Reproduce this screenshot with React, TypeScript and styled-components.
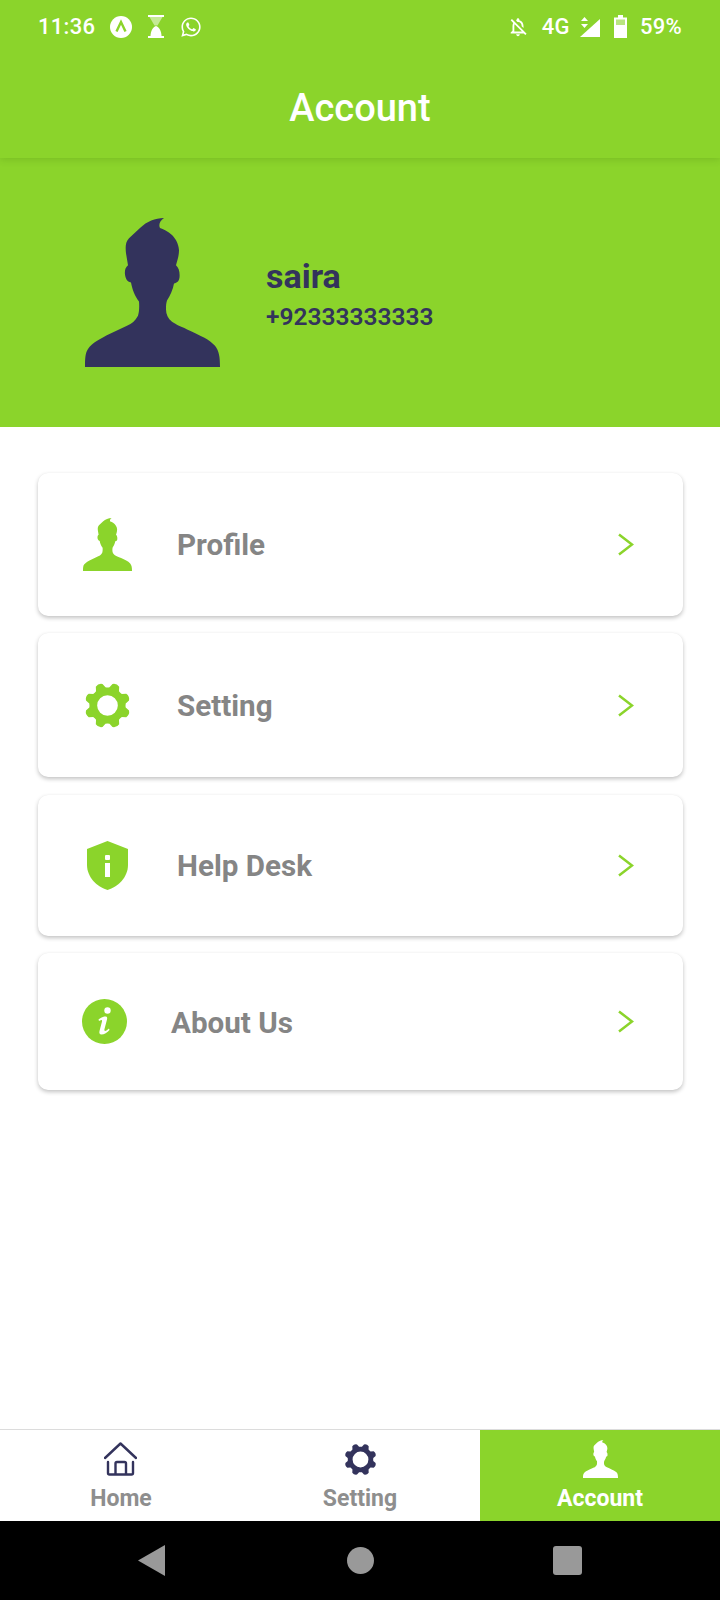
import React from 'react';
import styled, { createGlobalStyle } from 'styled-components';
import { FaWhatsapp } from 'react-icons/fa';
import { MdOutlineNotificationsOff } from 'react-icons/md';

const GREEN = '#8bd42b';
const NAVY = '#33335c';

const Global = createGlobalStyle`
  html, body { margin: 0; padding: 0; background: #fff; }
  body { font-family: Roboto, "Liberation Sans", sans-serif; }
`;

const Screen = styled.div`
  width: 720px;
  height: 1600px;
  display: flex;
  flex-direction: column;
  background: #fff;
  overflow: hidden;
`;

const TopBar = styled.header`
  position: relative;
  z-index: 1;
  height: 158px;
  flex: none;
  box-sizing: border-box;
  padding: 15px 38px 0;
  background: ${GREEN};
  box-shadow: 0 2px 7px rgba(40, 80, 0, 0.16);
  color: #fff;
  display: flex;
  flex-direction: column;
`;

const StatusRow = styled.div`
  height: 23px;
  display: flex;
  align-items: center;
  font-size: 22px;
  line-height: 23px;
`;

const StatusGroup = styled.div`
  display: flex;
  align-items: center;
`;

const StatusSpacer = styled.div`
  flex: 1;
`;

const StatusText = styled.span<{ $ml?: number }>`
  margin-left: ${(p) => p.$ml ?? 0}px;
  letter-spacing: 0.3px;
  font-weight: 500;
`;

const StatusSvg = styled.svg<{ $ml: number }>`
  display: block;
  flex: none;
  margin-left: ${(p) => p.$ml}px;
`;

const Whats = styled(FaWhatsapp)`
  display: block;
  margin-left: 16px;
`;

const BellOff = styled(MdOutlineNotificationsOff)`
  display: block;
`;

const Title = styled.h1`
  margin: 46px 0 0;
  text-align: center;
  font-size: 38px;
  line-height: 48px;
  font-weight: 500;
`;

const Banner = styled.section`
  height: 269px;
  flex: none;
  box-sizing: border-box;
  padding: 60px 0 0 85px;
  background: ${GREEN};
  display: flex;
  align-items: flex-start;
`;

const AvatarIcon = styled.svg`
  display: block;
  flex: none;
`;

const BannerText = styled.div`
  margin: 38px 0 0 46px;
  color: ${NAVY};
`;

const UserName = styled.div`
  font-size: 34px;
  line-height: 40px;
  font-weight: 700;
`;

const UserPhone = styled.div`
  margin-top: 6px;
  font-size: 24.5px;
  line-height: 30px;
  font-weight: 600;
`;

const Menu = styled.main`
  flex: 1;
  padding: 46px 37px 0 38px;
  display: flex;
  flex-direction: column;
  gap: 17.3px;
`;

const Card = styled.div<{ $h: number }>`
  height: ${(p) => p.$h}px;
  flex: none;
  box-sizing: border-box;
  padding-right: 49px;
  display: flex;
  align-items: center;
  background: #fff;
  border-radius: 10px;
  box-shadow: 0 2px 4px rgba(0, 0, 0, 0.24), 0 0 1px rgba(0, 0, 0, 0.05);
`;

const IconCell = styled.div<{ $inset?: number }>`
  width: 139px;
  flex: none;
  display: flex;
  justify-content: center;
  box-sizing: border-box;
  padding-right: ${(p) => p.$inset ?? 0}px;
`;

const CardLabel = styled.span<{ $shift?: number; $drop?: number }>`
  flex: 1;
  margin-left: ${(p) => p.$shift ?? 0}px;
  padding-top: ${(p) => p.$drop ?? 0}px;
  color: #858585;
  font-size: 29.6px;
  line-height: 36px;
  font-weight: 700;
`;

const Chevron = styled.svg`
  display: block;
  flex: none;
`;

const TabBar = styled.nav`
  height: 92px;
  flex: none;
  box-sizing: border-box;
  border-top: 1px solid #dcdcdc;
  display: grid;
  grid-template-columns: repeat(3, 240px);
`;

const Tab = styled.div<{ $active?: boolean }>`
  display: flex;
  flex-direction: column;
  align-items: center;
  background: ${(p) => (p.$active ? GREEN : '#fff')};
  color: ${(p) => (p.$active ? '#fff' : '#8e8e8e')};
`;

const TabIcon = styled.div`
  height: 46px;
  padding-top: 6px;
  display: flex;
  align-items: center;
`;

const TabLabel = styled.span<{ $nudge?: number }>`
  margin-top: 3px;
  margin-left: ${(p) => p.$nudge ?? 0}px;
  font-size: 23px;
  line-height: 27px;
  font-weight: 700;
`;

const NavBar = styled.div`
  height: 79px;
  flex: none;
  background: #000;
  display: grid;
  grid-template-columns: repeat(3, 1fr);
  align-items: center;
`;

const NavCell = styled.div<{ $shift: number }>`
  display: flex;
  justify-content: center;
  transform: translateX(${(p) => p.$shift}px);
`;

const NavBack = styled.svg`
  display: block;
`;

const NavHome = styled.div`
  width: 27px;
  height: 27px;
  border-radius: 50%;
  background: #999;
`;

const NavRecent = styled.div`
  width: 29px;
  height: 29px;
  border-radius: 3px;
  background: #999;
`;

const PERSON =
  'M79 0C70 0.5 62 3 55 10L44 20C40 24 40.500 30 41 35L43 47C40.500 49 39.500 52 40 56C40.500 60 42 63 46 64C47 70 50 78 54 83C54.500 89 54 94 53 97C50 102 47 105 42 107L25 115C15 120 7 124 3 130C0.500 134 0 138 0 148H135C135 138 134 132 130 127C124 120 115 117 105 112C97 108 91 106 87 103C83 100 81 96 81 91C81 87 81 85 82 82C85 77 88 71 89 65C92 64 94 63 94.500 59C95 54 94 50 91 47C92 43 94 38 94 32C93.500 25 90 20 87 17C83 13 78 11 75 10C73.500 7 74.500 3 79 0Z';

const Person = ({ w, h, fill }: { w: number; h: number; fill: string }) => (
  <AvatarIcon width={w} height={h} viewBox="0 0 135 148" preserveAspectRatio="none">
    <path d={PERSON} fill={fill} />
  </AvatarIcon>
);

const gearPath = (hole: number) => {
  const c = 50;
  const outer = 50;
  const inner = 39;
  const n = 8;
  const pt = (r: number, a: number) =>
    `${(c + r * Math.sin(a)).toFixed(2)} ${(c - r * Math.cos(a)).toFixed(2)}`;
  let d = '';
  for (let i = 0; i < n; i++) {
    const a = ((i + 0.5) * 2 * Math.PI) / n;
    const w = Math.PI / n;
    d += `${i === 0 ? 'M' : 'L'}${pt(inner, a - w * 0.72)}`;
    d += `L${pt(outer - 3, a - w * 0.42)}`;
    d += `Q${pt(outer + 1.5, a)} ${pt(outer - 3, a + w * 0.42)}`;
    d += `L${pt(inner, a + w * 0.72)}`;
    d += `Q${pt(inner - 1, a + w)} ${pt(inner, a + w * 1.28)}`;
  }
  d += `ZM${c - hole} ${c}a${hole} ${hole} 0 1 0 ${hole * 2} 0a${hole} ${hole} 0 1 0 ${-hole * 2} 0Z`;
  return d;
};

const Gear = ({ size, hole, fill }: { size: number; hole: number; fill: string }) => (
  <AvatarIcon width={size} height={size} viewBox="0 0 100 100">
    <path d={gearPath(hole)} fill={fill} fillRule="evenodd" />
  </AvatarIcon>
);

const Shield = () => (
  <AvatarIcon width={41} height={49} viewBox="0 0 41 49">
    <path
      d="M20.500 0L41 8V24C41 36 31 46 20.500 49C10 46 0 36 0 24V8Z"
      fill={GREEN}
    />
    <rect x="18" y="14" width="5" height="5" rx="1" fill="#fff" />
    <rect x="18" y="22" width="5" height="14" fill="#fff" />
  </AvatarIcon>
);

const InfoCircle = () => (
  <AvatarIcon width={45} height={45} viewBox="0 0 45 45">
    <circle cx="22.500" cy="22.500" r="22.500" fill={GREEN} />
    <circle cx="25.500" cy="11.500" r="3.200" fill="#fff" />
    <path
      d="M16.500 20.500C18 19 21 17.500 23.500 17.500C25 17.500 25.500 18.500 25 20.500L22.500 30C22 32 23 32.500 24.500 31.500L27 29.500L27.500 31C25.500 33.500 22 35.500 19.500 35.500C17.500 35.500 17 34 17.500 32L20 22.500C20.300 21 19.500 20.500 18 21.500L17 22Z"
      fill="#fff"
    />
  </AvatarIcon>
);

const ChevronIcon = () => (
  <Chevron width={17} height={23} viewBox="0 0 17 23">
    <path d="M2 1.500L15 11.500L2 21.500" fill="none" stroke={GREEN} strokeWidth="2.500" />
  </Chevron>
);

const HomeIcon = () => (
  <AvatarIcon width={33} height={34} viewBox="0 0 33 34" fill="none" stroke={NAVY} strokeWidth="2.400">
    <path d="M1 16L16.500 1.500L32 16" strokeLinecap="round" strokeLinejoin="round" />
    <path d="M4 20V31C4 32 4.500 32.500 5.500 32.500H27.500C28.500 32.500 29 32 29 31V20" strokeLinecap="round" />
    <path d="M11.500 32V21.500C11.500 20.500 12 20 13 20H20.500C21.500 20 22 20.500 22 21.500V32" />
  </AvatarIcon>
);

const rows = [
  { label: 'Profile', h: 143, icon: <Person w={49} h={53} fill={GREEN} />, shift: 0, inset: 0, drop: 0 },
  { label: 'Setting', h: 144, icon: <Gear size={47} hole={22} fill={GREEN} />, shift: 0, inset: 0, drop: 1 },
  { label: 'Help Desk', h: 141, icon: <Shield />, shift: 0, inset: 0, drop: 2 },
  { label: 'About Us', h: 137, icon: <InfoCircle />, shift: -6, inset: 6, drop: 4 },
];

export default function App() {
  return (
    <Screen>
      <Global />
      <TopBar>
        <StatusRow>
          <StatusGroup>
            <StatusText>11:36</StatusText>
            <StatusSvg $ml={15} width={22} height={22} viewBox="0 0 22 22">
              <circle cx="11" cy="11" r="11" fill="#fff" />
              <path d="M6.500 15.500L11 6L15.500 15.500" fill="none" stroke={GREEN} strokeWidth="2.400" />
            </StatusSvg>
            <StatusSvg $ml={16} width={16} height={23} viewBox="0 0 16 23">
              <path d="M0 0H16V2H0Z" fill="#fff" />
              <path d="M1.500 2H14.500L9.500 10.500H6.500Z" fill="#fff" opacity="0.5" />
              <path d="M8 11C11 12 13.500 16 13.500 21H2.500C2.500 16 5 12 8 11Z" fill="#fff" />
              <path d="M0 21H16V23H0Z" fill="#fff" />
            </StatusSvg>
            <Whats size={22} color="#fff" />
          </StatusGroup>
          <StatusSpacer />
          <StatusGroup>
            <BellOff size={22} color="#fff" />
            <StatusText $ml={13}>4G</StatusText>
            <StatusSvg $ml={10} width={20} height={20} viewBox="0 0 20 20">
              <path d="M4.500 0L8 4H1Z" fill="#fff" />
              <path d="M4.500 11L8 7H1Z" fill="#fff" />
              <path d="M20 2V20H0Z" fill="#fff" />
            </StatusSvg>
            <StatusSvg $ml={14} width={13} height={23} viewBox="0 0 13 23">
              <path d="M4 0H9V2.500H13V23H0V2.500H4Z" fill="#fff" />
              <path d="M2 4.500H11V10H2Z" fill={GREEN} opacity="0.6" />
            </StatusSvg>
            <StatusText $ml={13}>59%</StatusText>
          </StatusGroup>
        </StatusRow>
        <Title>Account</Title>
      </TopBar>

      <Banner>
        <Person w={135} h={149} fill={NAVY} />
        <BannerText>
          <UserName>saira</UserName>
          <UserPhone>+92333333333</UserPhone>
        </BannerText>
      </Banner>

      <Menu>
        {rows.map((r) => (
          <Card key={r.label} $h={r.h}>
            <IconCell $inset={r.inset}>{r.icon}</IconCell>
            <CardLabel $shift={r.shift} $drop={r.drop}>{r.label}</CardLabel>
            <ChevronIcon />
          </Card>
        ))}
      </Menu>

      <TabBar>
        <Tab>
          <TabIcon>
            <HomeIcon />
          </TabIcon>
          <TabLabel $nudge={2}>Home</TabLabel>
        </Tab>
        <Tab>
          <TabIcon>
            <Gear size={33} hole={24} fill={NAVY} />
          </TabIcon>
          <TabLabel>Setting</TabLabel>
        </Tab>
        <Tab $active>
          <TabIcon>
            <Person w={35} h={38} fill="#fff" />
          </TabIcon>
          <TabLabel>Account</TabLabel>
        </Tab>
      </TabBar>

      <NavBar>
        <NavCell $shift={31}>
          <NavBack width={27} height={31} viewBox="0 0 27 31">
            <path d="M27 0V31L0 15.500Z" fill="#999" />
          </NavBack>
        </NavCell>
        <NavCell $shift={0}>
          <NavHome />
        </NavCell>
        <NavCell $shift={-33}>
          <NavRecent />
        </NavCell>
      </NavBar>
    </Screen>
  );
}
